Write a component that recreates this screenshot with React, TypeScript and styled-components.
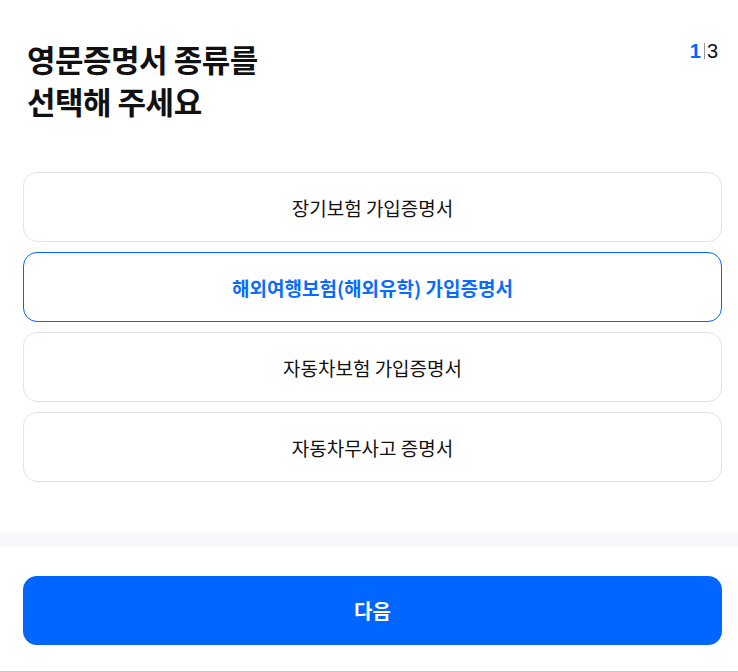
import React, { useState } from 'react'
import styled, { createGlobalStyle } from 'styled-components'

// Style
const GlobalStyle = createGlobalStyle`
  html, body {
    margin: 0;
    padding: 0;
    background: #ffffff;
  }
  body {
    font-family: 'Noto Sans CJK KR', 'Noto Sans', sans-serif;
    color: #111111;
  }
  * {
    box-sizing: border-box;
  }
`

const Page = styled.div`
  width: 738px;
  height: 672px;
  display: flex;
  flex-direction: column;
  border-bottom: 1px solid #c8c8c8;
`

const Content = styled.div`
  padding: 38px 16px 50px 23px;
`

const Header = styled.div`
  display: flex;
  justify-content: space-between;
  align-items: flex-start;
  padding: 0 4px 0 4px;
`

const Title = styled.h1`
  margin: 0;
  font-size: 31px;
  line-height: 42px;
  font-weight: 700;
  letter-spacing: -0.5px;
  color: #111111;
`

const Step = styled.div`
  display: flex;
  align-items: center;
  margin-top: 3px;
  font-family: 'Liberation Sans', Arial, sans-serif;
  font-size: 20px;
  line-height: 20px;
`

const StepCurrent = styled.span`
  color: #0066ff;
  font-weight: 700;
`

const StepDivider = styled.span`
  width: 1px;
  height: 16px;
  margin: 0 2px 0 3px;
  background: #999999;
`

const StepTotal = styled.span`
  color: #111111;
`

const OptionList = styled.div`
  display: flex;
  flex-direction: column;
  gap: 10px;
  margin-top: 50px;
`

const Option = styled.button<{ $active: boolean }>`
  height: 70px;
  width: 100%;
  display: flex;
  align-items: center;
  justify-content: center;
  background: #ffffff;
  border: 1px solid ${({ $active }) => ($active ? '#0066ff' : '#e3e3e3')};
  border-radius: 14px;
  font-family: 'Noto Sans CJK KR', 'Noto Sans', sans-serif;
  font-size: 19px;
  letter-spacing: 0;
  font-weight: ${({ $active }) => ($active ? 700 : 400)};
  color: ${({ $active }) => ($active ? '#0a6cff' : '#111111')};
  cursor: pointer;
  padding: 0;
`

const Divider = styled.div`
  height: 14px;
  background: #f7f8f9;
`

const Footer = styled.div`
  padding: 30px 16px 0 23px;
`

const NextButton = styled.button`
  width: 100%;
  height: 69px;
  border: none;
  border-radius: 14px;
  background: #0066ff;
  color: #ffffff;
  font-family: 'Noto Sans CJK KR', 'Noto Sans', sans-serif;
  font-size: 20px;
  font-weight: 700;
  cursor: pointer;
`

const OPTIONS = [
  '장기보험 가입증명서',
  '해외여행보험(해외유학) 가입증명서',
  '자동차보험 가입증명서',
  '자동차무사고 증명서',
]

// Component
const App = () => {
  const [selected, setSelected] = useState<number>(1)

  return (
    <Page>
      <GlobalStyle />
      <Content>
        <Header>
          <Title>
            영문증명서 종류를
            <br />
            선택해 주세요
          </Title>
          <Step>
            <StepCurrent>1</StepCurrent>
            <StepDivider />
            <StepTotal>3</StepTotal>
          </Step>
        </Header>
        <OptionList>
          {OPTIONS.map((label, i) => (
            <Option key={label} $active={selected === i} onClick={() => setSelected(i)}>
              {label}
            </Option>
          ))}
        </OptionList>
      </Content>
      <Divider />
      <Footer>
        <NextButton>다음</NextButton>
      </Footer>
    </Page>
  )
}

export default App
